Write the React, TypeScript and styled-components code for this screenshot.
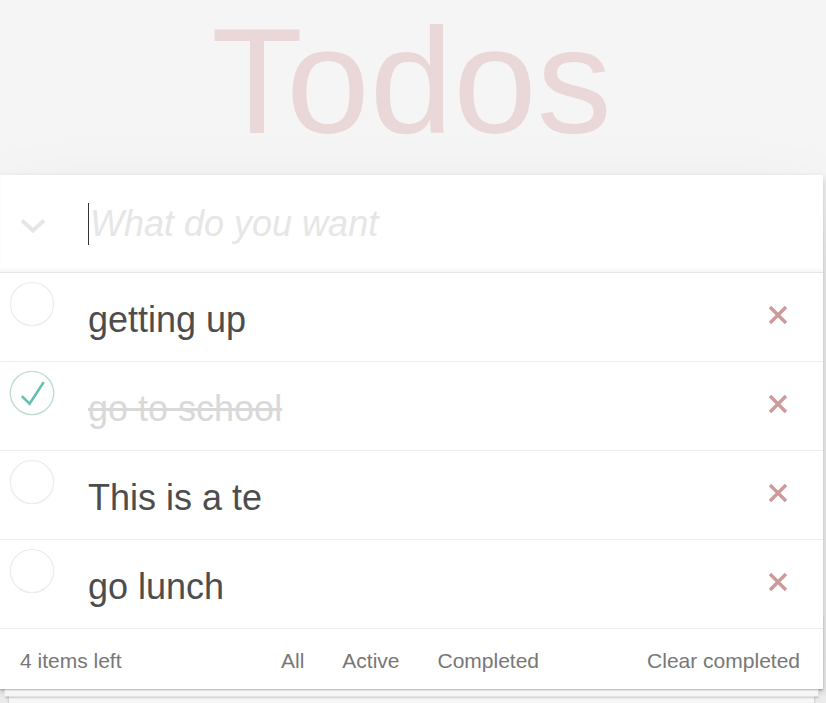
import React, { useState } from 'react';
import styled, { createGlobalStyle } from 'styled-components';

const GlobalStyle = createGlobalStyle`
  html, body {
    margin: 0;
    padding: 0;
  }
  body {
    background: #f5f5f5;
    font-family: 'Liberation Sans', Arial, sans-serif;
    color: #4d4d4d;
    -webkit-font-smoothing: antialiased;
  }
`;

interface Todo {
  id: number;
  title: string;
  completed: boolean;
}

const initialTodos: Todo[] = [
  { id: 1, title: 'getting up', completed: false },
  { id: 2, title: 'go to school', completed: true },
  { id: 3, title: 'This is a te', completed: false },
  { id: 4, title: 'go lunch', completed: false },
];

const Page = styled.div`
  width: 823px;
  padding-bottom: 40px;
`;

const Header = styled.header`
  height: 175px;
`;

const Title = styled.h1`
  margin: 0;
  padding-top: 6px;
  font-size: 150px;
  font-weight: 100;
  line-height: 1;
  text-align: center;
  color: rgba(175, 47, 47, 0.15);
`;

const TodoApp = styled.section`
  position: relative;
  background: #fff;
  box-shadow: 0 3px 6px 0 rgba(0, 0, 0, 0.2), 0 37px 75px 0 rgba(0, 0, 0, 0.1);
`;

const NewRow = styled.div`
  display: flex;
  align-items: center;
  height: 97px;
  border-bottom: 1px solid #e6e6e6;
  box-shadow: inset 0 -3px 2px rgba(0, 0, 0, 0.03);
`;

const ToggleAll = styled.div`
  width: 88px;
  padding: 4px 0 0 20px;
  box-sizing: border-box;
  display: flex;
  align-items: center;
`;

const Caret = styled.span`
  width: 1px;
  height: 42px;
  margin-top: 1px;
  background: #333;
  flex-shrink: 0;
`;

const NewTodo = styled.input`
  flex: 1;
  border: 0;
  outline: none;
  background: transparent;
  padding: 0 24px 0 1px;
  font-family: inherit;
  font-size: 36px;
  line-height: 49px;
  color: #4d4d4d;
  &::placeholder {
    font-style: italic;
    color: #e6e6e6;
  }
`;

const List = styled.ul`
  margin: 0;
  padding: 0;
  list-style: none;
`;

const Item = styled.li`
  display: flex;
  align-items: flex-start;
  border-bottom: 1px solid #ededed;
`;

const Toggle = styled.button`
  width: 88px;
  padding: 8px 0 0 9px;
  border: 0;
  background: none;
  text-align: left;
  cursor: pointer;
  flex-shrink: 0;
  svg {
    display: block;
  }
`;

const Label = styled.label<{ $done: boolean }>`
  flex: 1;
  padding: 25px 0 20px;
  font-size: 36px;
  line-height: 43px;
  color: ${({ $done }) => ($done ? '#d9d9d9' : '#4d4d4d')};
  text-decoration: ${({ $done }) => ($done ? 'line-through' : 'none')};
  white-space: nowrap;
`;

const Destroy = styled.button`
  align-self: center;
  width: 60px;
  height: 60px;
  margin: 0 15px 4px 0;
  border: 0;
  background: none;
  display: flex;
  align-items: center;
  justify-content: center;
  cursor: pointer;
  padding: 0;
`;

const Footer = styled.footer`
  position: relative;
  display: grid;
  grid-template-columns: 1fr auto 1fr;
  align-items: center;
  padding: 15px 23px 15px 20px;
  height: 30px;
  font-size: 21px;
  line-height: 30px;
  color: #777;
  &::before {
    content: '';
    position: absolute;
    left: 0;
    right: 0;
    bottom: 0;
    height: 75px;
    pointer-events: none;
    box-shadow: 0 1.5px 1.5px rgba(0, 0, 0, 0.2), 0 12px 0 -4.5px #f6f6f6,
      0 13.5px 1.5px -4.5px rgba(0, 0, 0, 0.2), 0 24px 0 -9px #f6f6f6,
      0 25.5px 3px -9px rgba(0, 0, 0, 0.2);
  }
`;

const Count = styled.span`
  text-align: left;
  padding-top: 2px;
`;

const Filters = styled.ul`
  display: flex;
  gap: 8px;
  margin: 0;
  padding: 2px 0 0;
  list-style: none;
`;

const FilterLink = styled.a`
  display: block;
  margin: 0 4.5px;
  padding: 0 10.5px;
  color: inherit;
  text-decoration: none;
  cursor: pointer;
`;

const ClearButton = styled.button`
  justify-self: end;
  border: 0;
  background: none;
  padding: 2px 0 0;
  font-family: inherit;
  font-size: 21px;
  line-height: 30px;
  color: #777;
  cursor: pointer;
`;

const Chevron = () => (
  <svg width="26" height="16" viewBox="0 0 26 16">
    <polyline points="2,2.5 13,12.5 24,2.5" fill="none" stroke="#e6e6e6" strokeWidth="4" />
  </svg>
);

const CheckCircle = ({ done }: { done: boolean }) => (
  <svg width="46" height="46" viewBox="-2 -2 104 104">
    <circle cx="50" cy="50" r="49" fill="none" stroke={done ? '#bddad5' : '#ededed'} strokeWidth="3" />
    {done && <path d="M74 24L44 70 29 55l-4 4 20 20 34-52z" fill="#5dc2af" />}
  </svg>
);

const Cross = () => (
  <svg width="20" height="20" viewBox="0 0 20 20">
    <path d="M2 2L18 18M18 2L2 18" stroke="#cc9a9a" strokeWidth="3.4" />
  </svg>
);

export default function App() {
  const [todos, setTodos] = useState<Todo[]>(initialTodos);

  const toggle = (id: number) =>
    setTodos((list) => list.map((t) => (t.id === id ? { ...t, completed: !t.completed } : t)));
  const remove = (id: number) => setTodos((list) => list.filter((t) => t.id !== id));

  return (
    <Page>
      <GlobalStyle />
      <Header>
        <Title>Todos</Title>
      </Header>
      <TodoApp>
        <NewRow>
          <ToggleAll>
            <Chevron />
          </ToggleAll>
          <Caret />
          <NewTodo placeholder="What do you want" />
        </NewRow>
        <List>
          {todos.map((t) => (
            <Item key={t.id}>
              <Toggle onClick={() => toggle(t.id)}>
                <CheckCircle done={t.completed} />
              </Toggle>
              <Label $done={t.completed}>{t.title}</Label>
              <Destroy onClick={() => remove(t.id)}>
                <Cross />
              </Destroy>
            </Item>
          ))}
        </List>
        <Footer>
          <Count>{todos.length} items left</Count>
          <Filters>
            <li>
              <FilterLink>All</FilterLink>
            </li>
            <li>
              <FilterLink>Active</FilterLink>
            </li>
            <li>
              <FilterLink>Completed</FilterLink>
            </li>
          </Filters>
          <ClearButton>Clear completed</ClearButton>
        </Footer>
      </TodoApp>
    </Page>
  );
}
